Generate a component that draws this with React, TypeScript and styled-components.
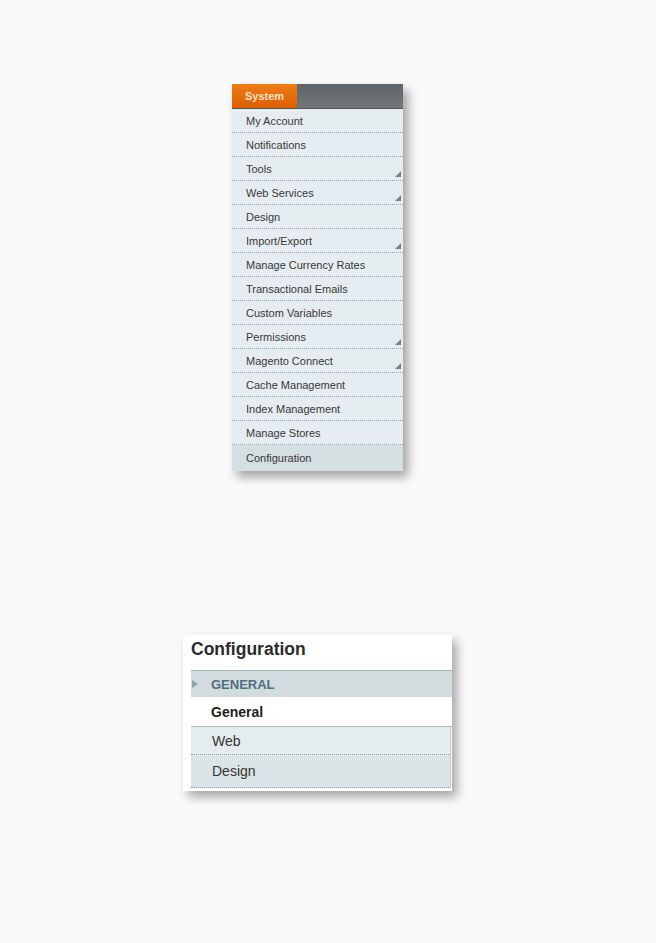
import React from "react";
import styled, { createGlobalStyle } from "styled-components";

const Global = createGlobalStyle`
  html, body { margin: 0; padding: 0; background: #fafafa; }
  body { font-family: Arial, "Liberation Sans", Helvetica, sans-serif; }
`;

const Page = styled.div`
  display: flex;
  flex-direction: column;
  align-items: flex-start;
  padding-top: 84px;
  min-height: 943px;
  box-sizing: border-box;
`;

const Menu = styled.nav`
  margin-left: 232px;
  width: 171px;
  display: flex;
  flex-direction: column;
  background: #e6edf0;
  box-shadow: 5px 6px 10px rgba(0, 0, 0, 0.36);
`;

const MenuHeader = styled.div`
  display: flex;
  height: 24px;
  background: linear-gradient(#5d6366, #72787b);
  border-bottom: 1px solid #4f5456;
`;

const Tab = styled.div`
  width: 65px;
  display: flex;
  align-items: center;
  padding-left: 13px;
  box-sizing: border-box;
  background: linear-gradient(#ef7d14, #dc5e02);
  color: #fde3c6;
  font-weight: bold;
  font-size: 11px;
`;

const MenuItem = styled.div<{ $active?: boolean; $last?: boolean }>`
  position: relative;
  height: ${(p) => (p.$last ? 26 : 24)}px;
  box-sizing: border-box;
  display: flex;
  align-items: center;
  padding-left: 14px;
  font-size: 11px;
  color: #383838;
  background: ${(p) => (p.$active ? "#d4dfe2" : "#e6edf0")};
  border-bottom: ${(p) => (p.$last ? "none" : "1px dotted #9aa3a7")};
`;

const SubArrow = styled.span`
  position: absolute;
  right: 2px;
  bottom: 3px;
  width: 0;
  height: 0;
  border-left: 6px solid transparent;
  border-bottom: 6px solid #7d8386;
`;

const Config = styled.section`
  margin-top: 164px;
  margin-left: 183px;
  width: 269px;
  background: #fff;
  padding-left: 8px;
  padding-bottom: 3px;
  box-sizing: border-box;
  box-shadow: 5px 6px 10px rgba(0, 0, 0, 0.34);
`;

const Title = styled.h2`
  margin: 0;
  height: 36px;
  display: flex;
  align-items: flex-start;
  padding-top: 4px;
  font-size: 17.5px;
  font-weight: bold;
  color: #2b2b2b;
  border-bottom: 1px solid #a7b3b8;
  box-sizing: border-box;
`;

const GroupHead = styled.div`
  height: 26px;
  display: flex;
  align-items: center;
  gap: 13px;
  background: #d2dcdf;
  color: #4d6f7f;
  font-size: 13px;
  font-weight: bold;
`;

const Caret = styled.span`
  width: 0;
  height: 0;
  margin-left: 1px;
  border-top: 4px solid transparent;
  border-bottom: 4px solid transparent;
  border-left: 6px solid #8ea2aa;
`;

const SectionLabel = styled.div`
  height: 30px;
  display: flex;
  align-items: center;
  padding-left: 20px;
  font-size: 14px;
  font-weight: bold;
  color: #1e1e1e;
  border-bottom: 1px solid #b3bdc1;
  box-sizing: border-box;
`;

const Link = styled.div<{ $tone: string }>`
  height: ${(p) => (p.$tone === "dark" ? 33 : 28)}px;
  box-sizing: border-box;
  display: flex;
  align-items: center;
  padding-left: 21px;
  font-size: 14px;
  color: #333;
  background: ${(p) => (p.$tone === "dark" ? "#dbe4e6" : "#e5ecee")};
  border-right: 1px solid #c3cbce;
  border-bottom: 1px dotted #8e979b;
  margin-right: 1px;
`;

const items: { label: string; sub?: boolean; active?: boolean }[] = [
  { label: "My Account" },
  { label: "Notifications" },
  { label: "Tools", sub: true },
  { label: "Web Services", sub: true },
  { label: "Design" },
  { label: "Import/Export", sub: true },
  { label: "Manage Currency Rates" },
  { label: "Transactional Emails" },
  { label: "Custom Variables" },
  { label: "Permissions", sub: true },
  { label: "Magento Connect", sub: true },
  { label: "Cache Management" },
  { label: "Index Management" },
  { label: "Manage Stores" },
  { label: "Configuration", active: true },
];

export default function App() {
  return (
    <>
      <Global />
      <Page>
        <Menu>
          <MenuHeader>
            <Tab>System</Tab>
          </MenuHeader>
          {items.map((it, i) => (
            <MenuItem key={it.label} $active={it.active} $last={i === items.length - 1}>
              {it.label}
              {it.sub && <SubArrow />}
            </MenuItem>
          ))}
        </Menu>
        <Config>
          <Title>Configuration</Title>
          <GroupHead>
            <Caret />
            GENERAL
          </GroupHead>
          <SectionLabel>General</SectionLabel>
          <Link $tone="light">Web</Link>
          <Link $tone="dark">Design</Link>
        </Config>
      </Page>
    </>
  );
}
